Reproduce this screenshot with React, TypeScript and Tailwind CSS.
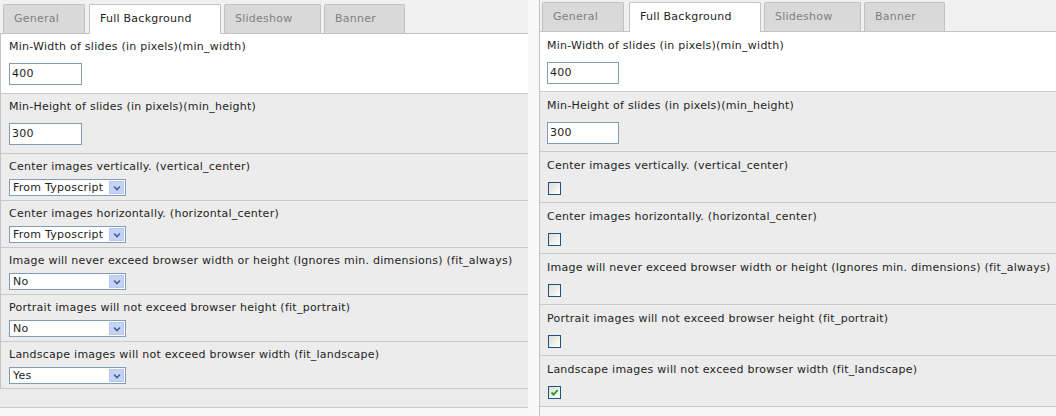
import React from "react";

type Row = { label: string; kind: "text" | "opt"; value?: string; sel?: string; checked?: boolean };

const rows: Row[] = [
  { label: "Min-Width of slides (in pixels)(min_width)", kind: "text", value: "400" },
  { label: "Min-Height of slides (in pixels)(min_height)", kind: "text", value: "300" },
  { label: "Center images vertically. (vertical_center)", kind: "opt", sel: "From Typoscript", checked: false },
  { label: "Center images horizontally. (horizontal_center)", kind: "opt", sel: "From Typoscript", checked: false },
  {
    label: "Image will never exceed browser width or height (Ignores min. dimensions) (fit_always)",
    kind: "opt",
    sel: "No",
    checked: false,
  },
  { label: "Portrait images will not exceed browser height (fit_portrait)", kind: "opt", sel: "No", checked: false },
  { label: "Landscape images will not exceed browser width (fit_landscape)", kind: "opt", sel: "Yes", checked: true },
];

const tabs = [
  { name: "General", w: "w-[82px]" },
  { name: "Full Background", w: "w-[132px]", active: true },
  { name: "Slideshow", w: "w-[97px]" },
  { name: "Banner", w: "w-[81px]" },
];

function Tabs({ gapFirst }: { gapFirst: string }) {
  return (
    <div className="flex items-end h-full">
      {tabs.map((t, i) => (
        <div
          key={t.name}
          className={
            "h-[29px] flex items-center pl-[10px] border border-b-0 rounded-t-[2px] whitespace-nowrap " +
            t.w +
            " " +
            (i === 0 ? "" : i === 1 ? gapFirst : "ml-[3px]") +
            " " +
            (t.active
              ? "bg-white border-[#c2c2c2] text-[#1e1e1e] h-[30px] -mb-px relative z-10"
              : "bg-[#d9d9d9] border-[#c2c2c2] text-[#808080]")
          }
        >
          {t.name}
        </div>
      ))}
    </div>
  );
}

function Select({ value }: { value: string }) {
  return (
    <div className="w-[117px] h-[17px] border border-[#7f9db9] bg-white flex items-center justify-between pl-[3px] pr-px">
      <span className="leading-[14px] whitespace-nowrap">{value}</span>
      <div className="w-[15px] h-[13px] bg-[#c3d4f7] border border-[#b4c8f0] flex items-center justify-center">
        <svg width="8" height="6" viewBox="0 0 8 6">
          <path d="M1 1.5 L4 4.5 L7 1.5" fill="none" stroke="#4d6185" strokeWidth="1.6" />
        </svg>
      </div>
    </div>
  );
}

function Checkbox({ checked }: { checked?: boolean }) {
  return (
    <div className="w-[13px] h-[13px] border border-[#1c5180] bg-gradient-to-br from-[#dcdcd7] to-white flex items-center justify-center">
      {checked && (
        <svg width="9" height="9" viewBox="0 0 9 9">
          <path d="M1.5 4.5 L3.6 6.6 L7.6 2.2" fill="none" stroke="#21a121" strokeWidth="1.8" />
        </svg>
      )}
    </div>
  );
}

function Panel({ checkboxes }: { checkboxes?: boolean }) {
  return (
    <div className="flex flex-col">
      {rows.map((r, i) => (
        <div
          key={i}
          className={
            "border-b border-[#c9c9c9] " +
            (i === 0 ? "bg-white " : "bg-[#ececec] ") +
            (checkboxes ? "pl-[7px] pt-[7px] " : "pl-[8px] pt-[6px] ") +
            (r.kind === "text" ? (checkboxes ? "pb-[7px]" : "pb-[8px]") : checkboxes ? "pb-[7px]" : "pb-[4px]")
          }
        >
          <div className="leading-[14px] h-[14px] whitespace-nowrap">{r.label}</div>
          {r.kind === "text" ? (
            <div
              className={
                (checkboxes ? "mt-[9px] w-[72px]" : "mt-[9px] w-[73px]") +
                " h-[22px] border border-[#7f9db9] bg-white flex items-center pl-[2px]"
              }
            >
              {r.value}
            </div>
          ) : checkboxes ? (
            <div className="mt-[9px] pl-px">
              <Checkbox checked={r.checked} />
            </div>
          ) : (
            <div className="mt-[5px]">
              <Select value={r.sel!} />
            </div>
          )}
        </div>
      ))}
    </div>
  );
}

export default function App() {
  return (
    <div className="w-[1056px] h-[416px] overflow-hidden bg-[#f5f5f5] flex text-[11px] tracking-[0.25px] text-[#1e1e1e] font-['DejaVu_Sans',sans-serif]">
      <div className="w-[528px] shrink-0 flex flex-col bg-[#f1f1f1]">
        <div className="h-[34px] pl-[3px] border-b border-[#c4c4c4]">
          <Tabs gapFirst="ml-[4px]" />
        </div>
        <div className="border-l border-[#c4c4c4]">
          <Panel />
        </div>
        <div className="h-[19px] bg-[#ebebeb] border-b border-[#c9c9c9]" />
        <div className="flex-1 bg-[#f6f6f6]" />
      </div>
      <div className="w-[11px] shrink-0 bg-[#f8f8f8]" />
      <div className="flex-1 min-w-0 flex flex-col border-l border-[#c4c4c4] bg-[#f0f0f0]">
        <div className="h-[32px] pl-[2px] border-b border-[#c4c4c4]">
          <Tabs gapFirst="ml-[5px]" />
        </div>
        <Panel checkboxes />
        <div className="flex-1 bg-[#f5f5f5]" />
      </div>
    </div>
  );
}
